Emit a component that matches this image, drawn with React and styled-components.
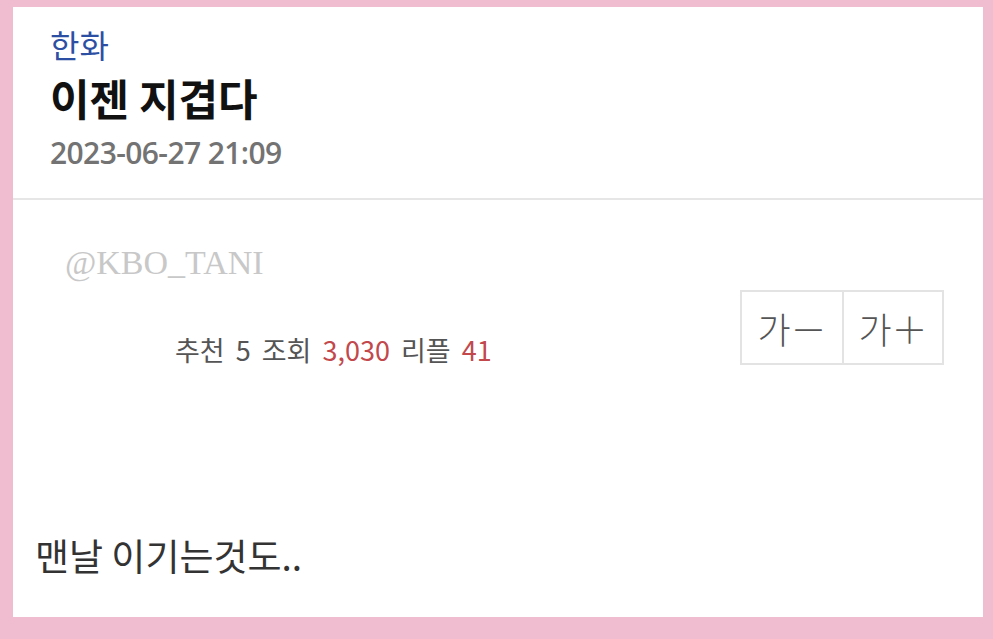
import * as React from "react"
import styled, { createGlobalStyle } from "styled-components"

const GlobalStyle = createGlobalStyle`
    html, body {
        margin: 0;
        padding: 0;
        background: #efbdcf;
    }
    body {
        font-family: "Noto Sans CJK KR", "Noto Sans", sans-serif;
    }
`;

//frame
const Frame = styled.div`
    width: 993px;
    height: 639px;
    box-sizing: border-box;
    padding: 7px 10px 22px 13px;
    background: #efbdcf;
`;

const Card = styled.div`
    height: 100%;
    background: #fff;
    display: flex;
    flex-direction: column;
`;

//header
const Header = styled.header`
    padding: 19px 37px 0;
    height: 193px;
    box-sizing: border-box;
    border-bottom: 2px solid #e6e6e6;
`;

const Category = styled.div`
    color: #2d4fa3;
    font-size: 32px;
    line-height: 36px;
`;

const Title = styled.h1`
    margin: 10px 0 0;
    font-size: 43px;
    font-weight: 700;
    line-height: 50px;
    color: #111;
`;

const DateText = styled.div`
    margin-top: 13px;
    color: #737373;
    font-size: 30px;
    line-height: 36px;
    letter-spacing: -0.6px;
    font-family: "Open Sans", "Noto Sans", sans-serif;
    font-weight: 600;
`;

//info area
const InfoArea = styled.section`
    padding: 43px 39px 0 52px;
`;

const Watermark = styled.div`
    color: #c8c8c8;
    font-size: 34px;
    line-height: 40px;
    font-family: "Liberation Serif", serif;
`;

const StatRow = styled.div`
    display: flex;
    align-items: flex-start;
    justify-content: space-between;
`;

const Stats = styled.div`
    margin: 49px 0 0 110px;
    font-size: 27px;
    line-height: 36px;
    color: #555;
    white-space: pre;
    word-spacing: 5px;
`;

const Num = styled.span`
    color: ${p => (p.red ? "#c2484c" : "#555")};
`;

const FontButtons = styled.div`
    display: flex;
    margin-top: 7px;
    border: 2px solid #e3e3e3;
`;

const FontButton = styled.button`
    width: 100px;
    height: 71px;
    border: none;
    border-left: ${p => (p.first ? "none" : "2px solid #e3e3e3")};
    background: #fff;
    color: #555;
    font-family: "Noto Sans CJK KR", sans-serif;
    font-size: 36px;
    font-weight: 300;
    padding: 0;
`;

//body
const Body = styled.div`
    padding: 163px 0 0 22px;
    font-size: 37px;
    color: #333;
    line-height: 48px;
`;

const App = () => {
    return (
        <Frame>
            <GlobalStyle />
            <Card>
                <Header>
                    <Category>한화</Category>
                    <Title>이젠 지겹다</Title>
                    <DateText>2023-06-27 21:09</DateText>
                </Header>
                <InfoArea>
                    <Watermark>@KBO_TANI</Watermark>
                    <StatRow>
                        <Stats>
                            추천 <Num>5</Num> 조회 <Num red>3,030</Num> 리플 <Num red>41</Num>
                        </Stats>
                        <FontButtons>
                            <FontButton first>가－</FontButton>
                            <FontButton>가＋</FontButton>
                        </FontButtons>
                    </StatRow>
                </InfoArea>
                <Body>맨날 이기는것도..</Body>
            </Card>
        </Frame>
    )
}

export default App
